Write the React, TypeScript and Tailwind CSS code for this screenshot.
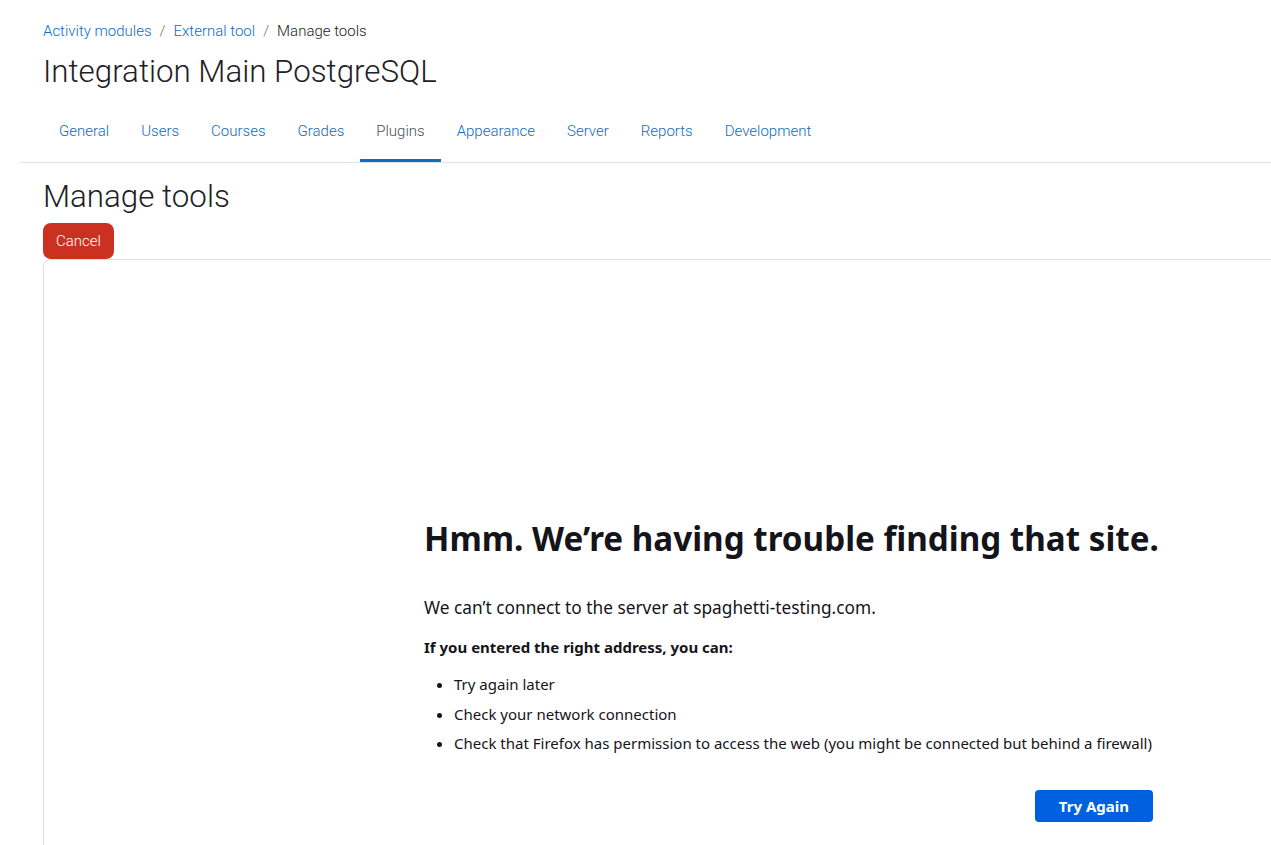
import React from 'react';

const tabs = ['General', 'Users', 'Courses', 'Grades', 'Plugins', 'Appearance', 'Server', 'Reports', 'Development'];

const tips = [
  'Try again later',
  'Check your network connection',
  'Check that Firefox has permission to access the web (you might be connected but behind a firewall)',
];

export default function App() {
  return (
    <div className="h-[845px] overflow-hidden bg-white font-['Roboto',sans-serif] font-light text-[#1d2125]">
      <div className="pl-[20px]">
        <div className="pl-[23px] pt-[20px]">
          <nav className="flex items-center text-[15px] leading-[22px]">
            <a className="text-[#0f6cbf]">Activity modules</a>
            <span className="px-2 text-[#6a737b]">/</span>
            <a className="text-[#0f6cbf]">External tool</a>
            <span className="px-2 text-[#6a737b]">/</span>
            <span>Manage tools</span>
          </nav>
          <h1 className="mt-[12px] text-[31.3px] leading-[36px]">Integration Main PostgreSQL</h1>
        </div>

        <div className="mt-[11px] border-b border-[#dee2e6] pl-[23px]">
          <ul className="flex text-[15px] leading-[22px]">
            {tabs.map(t => (
              <li
                key={t}
                className={
                  t === 'Plugins'
                    ? 'border-b-[3px] border-[#0f6cbf] px-4 pt-[19px] pb-[17px] text-[#495057]'
                    : 'border-b-[3px] border-transparent px-4 pt-[19px] pb-[17px] text-[#0f6cbf]'
                }
              >
                {t}
              </li>
            ))}
          </ul>
        </div>

        <div className="pl-[23px]">
          <h2 className="mt-[16px] text-[31.3px] leading-[36px]">Manage tools</h2>
          <button className="mt-[8px] block h-[36px] rounded-lg bg-[#ca3120] px-[13px] text-[15px] font-light text-white">Cancel</button>

          <div className="h-[600px] rounded-tl-lg border-t border-l border-[#dee2e6]">
            <div className="pl-[380px] pt-[259px] font-['Noto_Sans',sans-serif] font-normal text-[#15141a]">
              <h1 className="text-[33.2px] font-bold leading-[40px]">Hmm. We’re having trouble finding that site.</h1>
              <p className="mt-[36px] text-[17.3px] leading-[26px]">We can’t connect to the server at spaghetti-testing.com.</p>
              <p className="mt-[15px] text-[15px] font-bold leading-[22px]">If you entered the right address, you can:</p>
              <ul className="mt-[15px] w-[760px] list-disc pl-[30px] text-[15px] leading-[22px]">
                {tips.map(t => (
                  <li key={t} className="mb-[7.5px]">
                    {t}
                  </li>
                ))}
              </ul>
              <div className="mt-[36px] flex w-[729px] justify-end">
                <button className="h-[32px] rounded bg-[#0061e0] px-[24px] text-[15px] font-bold text-white">Try Again</button>
              </div>
            </div>
          </div>
        </div>
      </div>
    </div>
  );
}
